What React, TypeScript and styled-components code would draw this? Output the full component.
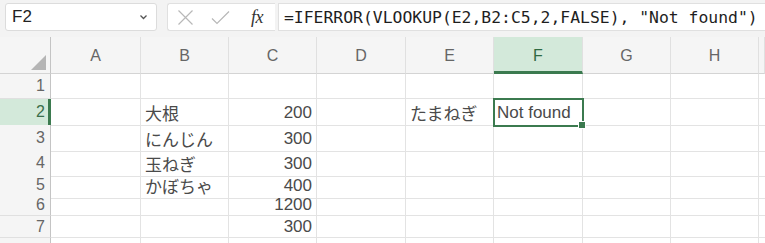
import React from 'react'
import styled, { createGlobalStyle, css } from 'styled-components'

const GlobalStyle = createGlobalStyle`
  html, body {
    margin: 0;
    padding: 0;
    background: #fff;
    overflow: hidden;
  }
  body {
    font-family: "Liberation Sans", "Noto Sans CJK JP", sans-serif;
  }
`

const Window = styled.div`
  width: 765px;
  height: 243px;
  overflow: hidden;
  display: flex;
  flex-direction: column;
  background: #fff;
`

const Toolbar = styled.div`
  height: 37px;
  flex: none;
  box-sizing: border-box;
  background: #f3f3f3;
  display: flex;
  align-items: flex-start;
  padding: 3px 0 0 5px;
`

const NameBox = styled.div`
  width: 152px;
  height: 28px;
  box-sizing: border-box;
  background: #fff;
  border: 1px solid #dcdcdc;
  border-radius: 3px;
  display: flex;
  align-items: center;
  justify-content: space-between;
  padding: 0 8px 0 6px;
  font-size: 17px;
  color: #222;
  margin-right: 10px;
`

const FormulaTools = styled.div`
  width: 108px;
  height: 28px;
  box-sizing: border-box;
  background: #fff;
  border: 1px solid #e0e0e0;
  border-right: none;
  border-radius: 3px 0 0 3px;
  display: flex;
  align-items: center;
  padding-left: 9px;
  gap: 17px;
`

const Fx = styled.span`
  font-family: "Liberation Serif", serif;
  font-style: italic;
  font-size: 18px;
  color: #333;
  margin-left: 4px;
  letter-spacing: -0.5px;
`

const FormulaInput = styled.div`
  flex: 1;
  height: 28px;
  box-sizing: border-box;
  background: #fff;
  border: 1px solid #e0e0e0;
  border-right: none;
  margin-left: 3px;
  display: flex;
  align-items: center;
  padding-left: 5px;
  font-family: "DejaVu Sans Mono", "Liberation Mono", monospace;
  font-size: 16.4px;
  color: #1e1e1e;
  white-space: nowrap;
  overflow: hidden;
`

const Sheet = styled.div`
  display: flex;
  flex-direction: column;
`

const colWidths = [51, 90, 88, 88, 89, 88, 89, 88, 88]
const gridCols = colWidths.map((w) => `${w}px`).join(' ') + ' 1fr'

const Row = styled.div<{ $h: number }>`
  display: grid;
  grid-template-columns: ${gridCols};
  height: ${(p) => p.$h}px;
  flex: none;
`

const ColHead = styled.div<{ $active?: boolean }>`
  box-sizing: border-box;
  background: #f5f5f5;
  border-right: 1px solid #e0e0e0;
  border-bottom: 1px solid #d4d4d4;
  display: flex;
  align-items: center;
  justify-content: center;
  font-size: 16px;
  color: #666;
  padding-top: 2px;
  ${(p) =>
    p.$active &&
    css`
      background: #d3e9da;
      color: #2f6a43;
      border-bottom: 3px solid #3b7a4f;
      padding-top: 4px;
    `}
`

const Corner = styled.div`
  box-sizing: border-box;
  background: #f5f5f5;
  border-right: 1px solid #c4c4c4;
  border-bottom: 1px solid #d4d4d4;
  display: flex;
  align-items: flex-end;
  justify-content: flex-end;
  padding: 0 4px 3px 0;
`

const RowHead = styled.div<{ $active?: boolean }>`
  box-sizing: border-box;
  background: #f5f5f5;
  border-right: 1px solid #c4c4c4;
  border-bottom: 1px solid #e0e0e0;
  display: flex;
  align-items: center;
  justify-content: flex-end;
  padding-right: 5px;
  font-size: 16px;
  color: #666;
  ${(p) =>
    p.$active &&
    css`
      background: #d3e9da;
      color: #3a6e4b;
      border-right: 3px solid #3b7a4f;
      padding-right: 3px;
    `}
`

const Cell = styled.div<{ $align?: 'left' | 'right'; $selected?: boolean }>`
  position: relative;
  box-sizing: border-box;
  border-right: 1px solid #e3e3e3;
  border-bottom: 1px solid #e3e3e3;
  display: flex;
  align-items: center;
  justify-content: ${(p) => (p.$align === 'right' ? 'flex-end' : 'flex-start')};
  padding: 1px 4px 0 4px;
  font-size: 17px;
  color: #4a4a4a;
  white-space: nowrap;
  overflow: visible;
  ${(p) =>
    p.$selected &&
    css`
      outline: 2px solid #3b7a4f;
      outline-offset: -1px;
      z-index: 2;
      padding-left: 3px;
      &::after {
        content: '';
        position: absolute;
        right: -4px;
        bottom: -4px;
        width: 6px;
        height: 6px;
        background: #3b7a4f;
        border: 1px solid #fff;
      }
    `}
`

const columns = ['A', 'B', 'C', 'D', 'E', 'F', 'G', 'H', '']

type CellData = { text: string; align?: 'left' | 'right' }

const data: Record<number, Record<string, CellData>> = {
  2: { B: { text: '大根' }, C: { text: '200', align: 'right' }, E: { text: 'たまねぎ' }, F: { text: 'Not found' } },
  3: { B: { text: 'にんじん' }, C: { text: '300', align: 'right' } },
  4: { B: { text: '玉ねぎ' }, C: { text: '300', align: 'right' } },
  5: { B: { text: 'かぼちゃ' }, C: { text: '400', align: 'right' } },
  6: { C: { text: '1200', align: 'right' } },
  7: { C: { text: '300', align: 'right' } },
  8: {},
}

const rowHeights: Record<number, number> = { 1: 25, 2: 26, 3: 25, 4: 22, 5: 22, 6: 22, 7: 22, 8: 22 }

const App: React.FC = () => {
  return (
    <Window>
      <GlobalStyle />
      <Toolbar>
        <NameBox>
          <span>F2</span>
          <svg width="9" height="6" viewBox="0 0 9 6">
            <path d="M1.5 1.5 L4.5 4.5 L7.5 1.5" fill="none" stroke="#555" strokeWidth="1.3" />
          </svg>
        </NameBox>
        <FormulaTools>
          <svg width="17" height="17" viewBox="0 0 17 17">
            <path d="M1.5 1.5 L15.5 15.5 M15.5 1.5 L1.5 15.5" stroke="#b8b8b8" strokeWidth="1.2" fill="none" />
          </svg>
          <svg width="19" height="15" viewBox="0 0 19 15">
            <path d="M1 8.5 L6 13.5 L18 1.5" stroke="#b8b8b8" strokeWidth="1.2" fill="none" />
          </svg>
          <Fx>fx</Fx>
        </FormulaTools>
        <FormulaInput>=IFERROR(VLOOKUP(E2,B2:C5,2,FALSE), "Not found")</FormulaInput>
      </Toolbar>
      <Sheet>
        <Row $h={37}>
          <Corner>
            <svg width="15" height="15" viewBox="0 0 15 15">
              <polygon points="15,0 15,15 0,15" fill="#b5b5b5" />
            </svg>
          </Corner>
          {columns.map((c, i) => (
            <ColHead key={i} $active={c === 'F'}>
              {c}
            </ColHead>
          ))}
        </Row>
        {[1, 2, 3, 4, 5, 6, 7, 8].map((r) => (
          <Row key={r} $h={rowHeights[r]}>
            <RowHead $active={r === 2}>{r < 8 ? r : ''}</RowHead>
            {columns.map((c, i) => {
              const cell = data[r]?.[c]
              return (
                <Cell key={i} $align={cell?.align} $selected={r === 2 && c === 'F'}>
                  {cell?.text}
                </Cell>
              )
            })}
          </Row>
        ))}
      </Sheet>
    </Window>
  )
}

export default App
